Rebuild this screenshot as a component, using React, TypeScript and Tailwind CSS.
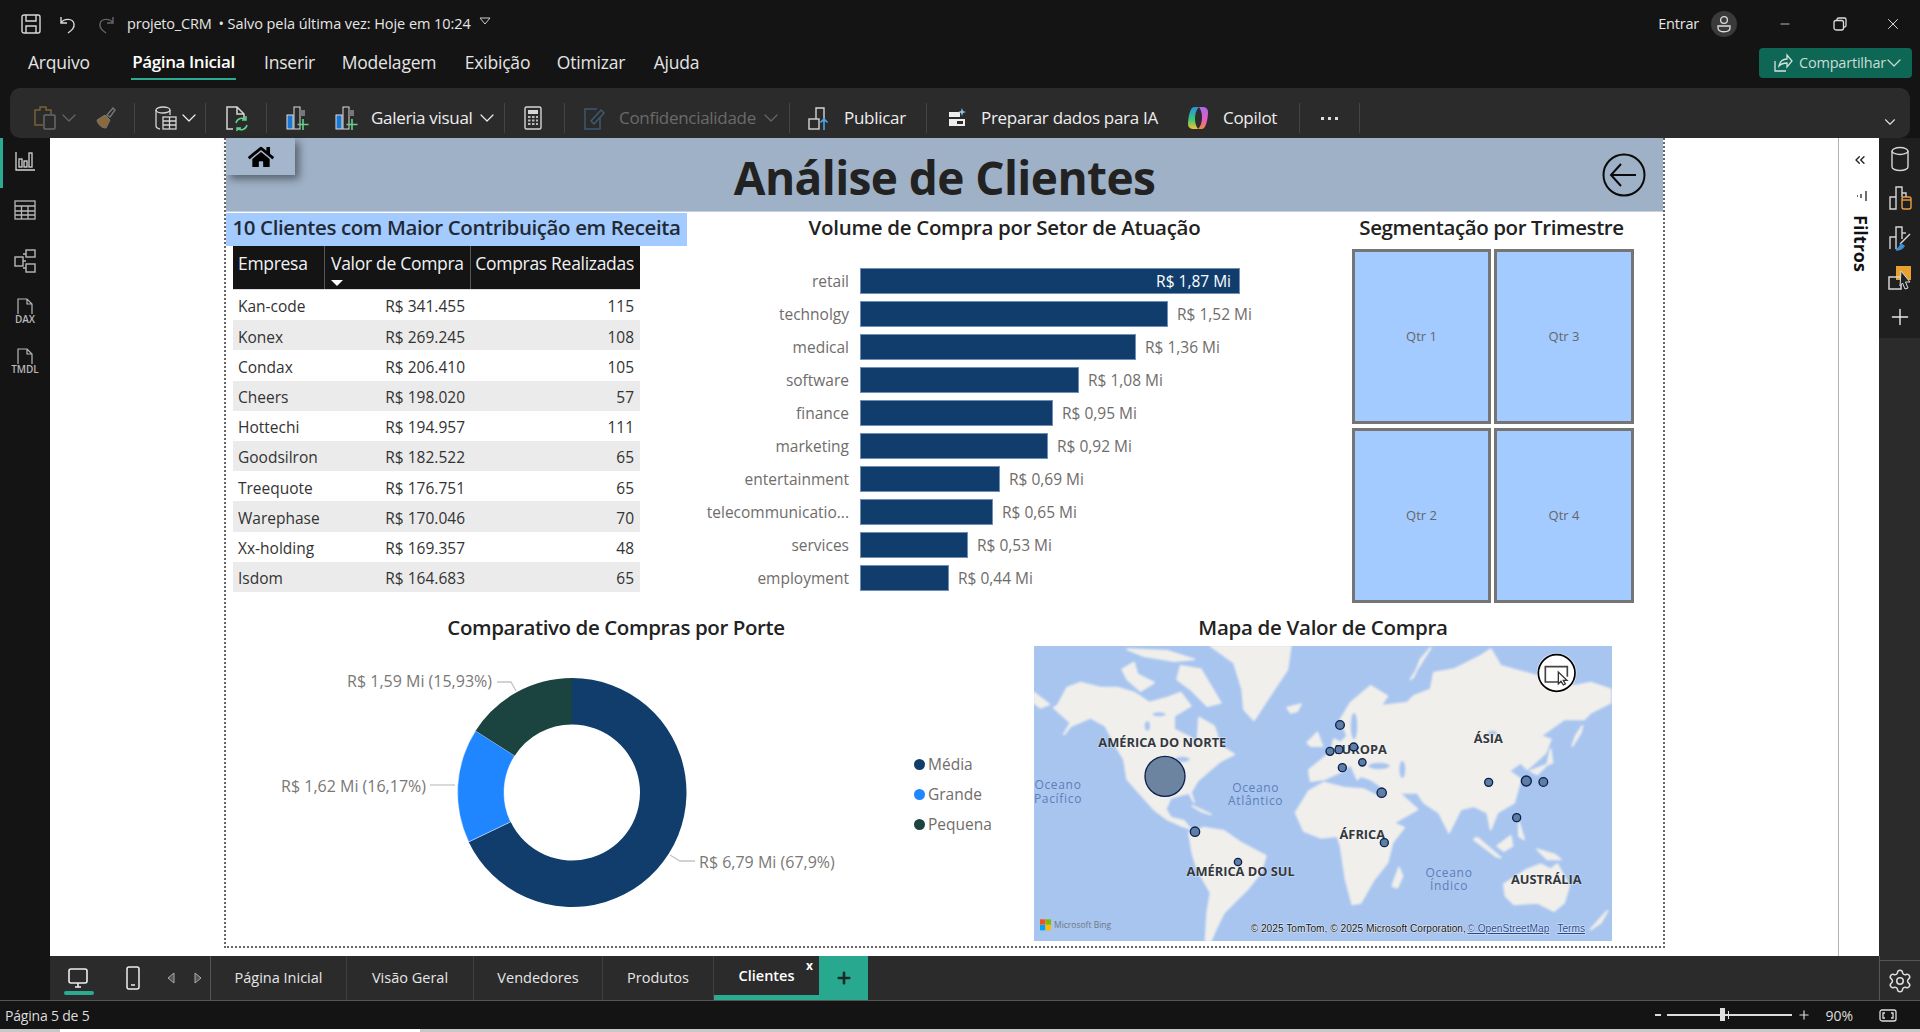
import { FaHome } from 'react-icons/fa'
import { ChevronDown, ChevronsLeft, Plus, Settings, X, Minus } from 'lucide-react'

const CLIENTS = [
  ['Kan-code', 'R$ 341.455', '115'],
  ['Konex', 'R$ 269.245', '108'],
  ['Condax', 'R$ 206.410', '105'],
  ['Cheers', 'R$ 198.020', '57'],
  ['Hottechi', 'R$ 194.957', '111'],
  ['Goodsilron', 'R$ 182.522', '65'],
  ['Treequote', 'R$ 176.751', '65'],
  ['Warephase', 'R$ 170.046', '70'],
  ['Xx-holding', 'R$ 169.357', '48'],
  ['Isdom', 'R$ 164.683', '65'],
]

const SECTORS = [
  { name: 'retail', value: 'R$ 1,87 Mi', width: 380 },
  { name: 'technolgy', value: 'R$ 1,52 Mi', width: 308 },
  { name: 'medical', value: 'R$ 1,36 Mi', width: 276 },
  { name: 'software', value: 'R$ 1,08 Mi', width: 219 },
  { name: 'finance', value: 'R$ 0,95 Mi', width: 193 },
  { name: 'marketing', value: 'R$ 0,92 Mi', width: 188 },
  { name: 'entertainment', value: 'R$ 0,69 Mi', width: 140 },
  { name: 'telecommunicatio...', value: 'R$ 0,65 Mi', width: 133 },
  { name: 'services', value: 'R$ 0,53 Mi', width: 108 },
  { name: 'employment', value: 'R$ 0,44 Mi', width: 89 },
]

const BUBBLES = [
  [393, 391, 60], [483, 557, 14], [612, 648, 11], [918, 237, 13], [888, 316, 12], [915, 311, 12], [959, 303, 12],
  [985, 349, 11], [925, 365, 12], [1043, 440, 14], [1051, 590, 12], [1364, 409, 12], [1477, 405, 15], [1528, 408, 13], [1448, 515, 12],
]

const LAND = [
  // america do norte
  '70,180 100,125 140,110 200,125 250,125 300,140 345,170 400,155 440,140 470,180 420,210 420,250 470,275 490,300 495,215 540,240 560,300 600,325 560,345 530,370 490,405 470,440 480,468 465,440 410,455 395,490 410,515 450,525 468,548 445,540 400,520 360,490 320,445 280,400 270,340 240,290 215,240 170,215 110,240 90,265 110,230 60,185',
  '265,70 300,50 310,85 360,110 320,135 280,100',
  '440,60 500,70 560,170 520,180 470,130 430,100',
  '280,10 400,15 480,40 420,45 330,30',
  '530,0 770,0 760,70 720,130 660,222 630,190 625,130 600,50',
  '760,185 800,175 790,195 770,200',
  '0,140 45,175 20,185 0,170',
  '475,480 530,505 500,495',
  // america do sul
  '465,560 510,545 570,555 620,590 695,630 680,680 640,730 600,770 570,800 545,850 530,885 515,885 520,800 530,740 490,670 475,620',
  // africa
  '785,500 825,435 870,410 930,425 990,430 1040,455 1075,530 1110,545 1075,590 1060,650 1020,700 980,770 955,775 935,700 920,600 910,570 860,575 810,555',
  '1075,720 1095,665 1105,690 1090,725',
  // eurasia
  '825,372 870,335 890,320 900,280 920,290 940,270 920,220 950,170 1010,120 1060,150 1040,180 1120,170 1140,150 1190,130 1200,80 1260,70 1340,30 1370,10 1400,60 1510,90 1620,120 1670,110 1730,130 1730,170 1670,200 1650,220 1590,220 1520,270 1550,280 1535,320 1480,370 1460,350 1425,375 1460,400 1440,470 1390,500 1370,550 1360,500 1320,480 1280,490 1245,560 1215,500 1170,470 1150,440 1095,440 1150,490 1080,530 1050,470 1040,420 1010,400 980,390 970,400 950,355 925,375 870,400 830,405',
  '1130,100 1190,5 1160,40 1140,90',
  '820,290 850,260 865,300 830,300',
  '1550,310 1555,350 1490,375 1510,385 1540,355',
  '1615,300 1640,260 1645,240 1625,270',
  '1330,575 1400,635 1385,630 1320,580',
  '1390,600 1430,570 1435,600 1410,615',
  '1455,530 1470,580 1455,570',
  '1510,610 1560,625 1580,640 1540,640',
  // australia
  '1410,715 1480,670 1520,655 1550,670 1570,655 1605,720 1590,770 1560,795 1510,770 1440,775 1415,750',
  '1670,850 1720,795 1700,830',
]

const Sep = ({ className }: { className: string }) => <div className={`h-[30px] w-px bg-[#444] ${className}`} />

const Chevron = ({ className }: { className: string }) => (
  <span className={`flex w-[14px] shrink-0 justify-center ${className}`}>
    <ChevronDown size={24} strokeWidth={1.2} className="shrink-0" />
  </span>
)

const BarPlusIcon = ({ className }: { className: string }) => (
  <svg viewBox="0 0 24 26" fill="none" className={`h-[26px] w-[24px] shrink-0 ${className}`}>
    <rect x="2" y="10" width="6" height="14" fill="#1976d2" stroke="#ddd" />
    <rect x="9" y="2" width="6" height="22" stroke="#ddd" />
    <rect x="15" y="5" width="5" height="6" fill="#777" />
    <path d="M18 14v11M12.5 19.5h11" stroke="#5fd38a" strokeWidth="1.6" />
  </svg>
)

const TitleBar = () => (
  <div className="flex h-[48px] shrink-0 items-center text-[#e6e6e6]">
    <svg viewBox="0 0 20 20" fill="none" stroke="#d8d8d8" strokeWidth="1.4" className="ml-[21px] h-[20px] w-[20px]">
      <rect x="1" y="1" width="18" height="18" rx="2" />
      <path d="M5 1v6h10V1M5 19v-7h10v7" />
    </svg>
    <svg viewBox="0 0 20 20" fill="none" stroke="#d8d8d8" strokeWidth="1.4" className="ml-[17px] h-[20px] w-[20px]">
      <path d="M3 3v6h6M3 9c3-5 12-5 13 1 .6 4-2 6-6 9" />
    </svg>
    <svg viewBox="0 0 20 20" fill="none" stroke="#666" strokeWidth="1.4" className="ml-[18px] h-[20px] w-[20px]">
      <path d="M17 3v6h-6M17 9c-3-5-12-5-13 1-.6 4 2 6 6 9" />
    </svg>
    <span className="ml-[11px] text-[14.5px] tracking-[-0.2px]">projeto_CRM</span>
    <span className="ml-[7px] text-[14.5px] tracking-[-0.07px]">• Salvo pela última vez: Hoje em 10:24</span>
    <svg viewBox="0 0 12 8" fill="none" stroke="#ccc" className="mb-[6px] ml-[8px] h-[8px] w-[12px]">
      <path d="M1 1h10L6 7z" />
    </svg>
    <span className="ml-auto text-[14.5px] tracking-[-0.2px]">Entrar</span>
    <div className="ml-[12px] flex h-[26px] w-[26px] items-center justify-center rounded-full bg-[#3a3a3a]">
      <svg viewBox="0 0 16 18" fill="none" stroke="#ddd" strokeWidth="1.3" className="h-[18px] w-[16px]">
        <circle cx="8" cy="5" r="3.4" />
        <path d="M2 11h12v2c0 5-12 5-12 0z" />
      </svg>
    </div>
    <Minus size={14} strokeWidth={1.4} className="ml-[41px] text-[#ddd]" />
    <svg viewBox="0 0 14 14" fill="none" stroke="#ddd" strokeWidth="1.3" className="ml-[41px] h-[14px] w-[14px]">
      <rect x="1" y="3.5" width="9.5" height="9.5" rx="2" />
      <path d="M4 3.5V2.5a1.5 1.5 0 0 1 1.5-1.5h6a1.5 1.5 0 0 1 1.5 1.5v6a1.5 1.5 0 0 1-1.5 1.5h-1" />
    </svg>
    <X size={18} strokeWidth={1.3} className="ml-[37px] mr-[18px] text-[#ddd]" />
  </div>
)

const MenuBar = () => (
  <div className="flex h-[40px] shrink-0 items-start whitespace-nowrap text-[17.5px] tracking-[-0.2px] text-[#e4e4e4]">
    <span className="ml-[28px] w-[61px] pt-[1px] text-center">Arquivo</span>
    <span className="ml-[42px] h-[32px] w-[105px] border-b-2 border-[#2bab92] pt-[1px] text-center text-[17px] font-semibold tracking-[-0.4px] text-white">
      Página Inicial
    </span>
    <span className="ml-[15px] w-[77px] pt-[1px] text-center">Inserir</span>
    <span className="w-[122px] pt-[1px] text-center">Modelagem</span>
    <span className="w-[95px] pt-[1px] text-center">Exibição</span>
    <span className="w-[92px] pt-[1px] text-center">Otimizar</span>
    <span className="w-[79px] pt-[1px] text-center">Ajuda</span>
    <div className="ml-auto mr-[8px] flex h-[30px] w-[153px] items-center rounded-[4px] bg-[#0e6655] pl-[14px] text-[14.5px] text-[#c9ddd5]">
      <svg viewBox="0 0 20 20" fill="none" stroke="#d5e3dd" strokeWidth="1.3" className="h-[20px] w-[20px] shrink-0">
        <path d="M2 8v10h11M6 13c1-5 4-7 8-7V2l5 6-5 6v-4c-3 0-6 1-8 3z" />
      </svg>
      <span className="ml-[6px]">Compartilhar</span>
      <Chevron className="ml-[1px]" />
    </div>
  </div>
)

const Ribbon = () => (
  <div className="ml-[10px] mr-[10px] flex h-[50px] shrink-0 items-center rounded-[10px] bg-[#2b2b2b] pt-[10px] text-[17px] tracking-[-0.3px] text-[#eeeeee]">
    <svg viewBox="0 0 24 26" fill="none" stroke="#6a6a6a" strokeWidth="1.5" className="ml-[23px] h-[26px] w-[24px] shrink-0">
      <path d="M10 20H2V5h5V2h6v3h5v4" stroke="#7a6238" />
      <rect x="11" y="10" width="11" height="14" rx="1" />
    </svg>
    <Chevron className="ml-[5px] text-[#666]" />
    <svg viewBox="0 0 24 26" fill="none" className="ml-[17px] h-[26px] w-[24px] shrink-0">
      <path d="M14 10l6-7 2 2-5 7z" stroke="#777" strokeWidth="1.4" />
      <path d="M4 15l8-5 5 5-4 8c-4 0-8-3-9-8z" fill="#8a6a3a" stroke="#777" />
    </svg>
    <Sep className="ml-[17px]" />
    <svg viewBox="0 0 24 26" fill="none" stroke="#d5d5d5" strokeWidth="1.3" className="ml-[19px] h-[26px] w-[24px] shrink-0">
      <ellipse cx="9" cy="5" rx="7" ry="3" />
      <path d="M2 5v16c0 1.5 2 2.5 4 3M16 5v5" />
      <rect x="9" y="12" width="13" height="12" />
      <path d="M9 16h13M9 20h13M15.5 12v12" />
    </svg>
    <Chevron className="ml-[4px] text-[#eee]" />
    <Sep className="ml-[9px]" />
    <svg viewBox="0 0 24 26" fill="none" strokeWidth="1.5" className="ml-[19px] h-[26px] w-[24px] shrink-0">
      <path d="M8 24H2V2h10l7 7v4M12 2v7h7" stroke="#d5d5d5" />
      <path d="M11 18a6 6 0 0 1 10-3M22 20a6 6 0 0 1-10 3M21 11v4h-4M12 27v-4h4" stroke="#5fd38a" />
    </svg>
    <Sep className="ml-[17px]" />
    <BarPlusIcon className="ml-[18px]" />
    <BarPlusIcon className="ml-[25px]" />
    <span className="ml-[13px] w-[101px] whitespace-nowrap">Galeria visual</span>
    <Chevron className="ml-[8px] text-[#eee]" />
    <Sep className="ml-[10px]" />
    <svg viewBox="0 0 24 26" fill="none" className="ml-[16px] h-[26px] w-[24px] shrink-0">
      <rect x="4" y="2" width="16" height="22" rx="1.5" stroke="#d5d5d5" strokeWidth="1.4" />
      <rect x="7" y="5" width="10" height="4" fill="#d5d5d5" />
      <path d="M7 12h2.5M11 12h2.5M15 12h2M7 15.5h2.5M11 15.5h2.5M15 15.5h2M7 19h2.5M11 19h2.5M15 19h2" stroke="#bbb" strokeWidth="2" />
    </svg>
    <Sep className="ml-[19px]" />
    <svg viewBox="0 0 24 26" fill="none" className="ml-[18px] h-[26px] w-[24px] shrink-0">
      <path d="M14 4H2v20h15V12" stroke="#3d5a72" strokeWidth="1.5" />
      <path d="M8 16l10-11 3 3-10 11z" stroke="#3d5a72" strokeWidth="1.5" />
    </svg>
    <span className="ml-[12px] w-[139px] whitespace-nowrap text-[#6a6a6a]">Confidencialidade</span>
    <Chevron className="ml-[6px] text-[#666]" />
    <Sep className="ml-[11px]" />
    <svg viewBox="0 0 24 26" fill="none" stroke="#d5d5d5" strokeWidth="1.4" className="ml-[17px] h-[26px] w-[24px] shrink-0">
      <rect x="2" y="14" width="10" height="10" />
      <path d="M9 14V3h8v14M17 3h0" />
      <path d="M17 25V14M13.5 17.5L17 14l3.5 3.5" stroke="#4aa3e8" strokeWidth="1.6" />
    </svg>
    <span className="ml-[13px] w-[62px] whitespace-nowrap">Publicar</span>
    <Sep className="ml-[20px]" />
    <svg viewBox="0 0 24 26" fill="none" className="ml-[18px] h-[26px] w-[24px] shrink-0">
      <path d="M4 7h11v5H4zM4 14h16v7H4z" fill="#eee" />
      <path d="M17 3l1 3 3 1-3 1-1 3-1-3-3-1 3-1z" fill="#8ec5f0" />
      <rect x="12" y="16" width="6" height="3" fill="#2b2b2b" />
    </svg>
    <span className="ml-[12px] w-[179px] whitespace-nowrap">Preparar dados para IA</span>
    <svg viewBox="0 0 24 26" className="ml-[26px] h-[26px] w-[24px] shrink-0">
      <defs>
        <linearGradient id="cpA" x1="0" y1="0" x2="0" y2="1">
          <stop offset="0" stopColor="#2a8fe8" />
          <stop offset="0.55" stopColor="#3bc47a" />
          <stop offset="1" stopColor="#f2c230" />
        </linearGradient>
        <linearGradient id="cpB" x1="0" y1="0" x2="0" y2="1">
          <stop offset="0" stopColor="#a86be8" />
          <stop offset="0.6" stopColor="#e85ec0" />
          <stop offset="1" stopColor="#f08a3c" />
        </linearGradient>
      </defs>
      <path d="M8 2h5c-3 3-4 7-4 12 0 4 1 7 3 10H8c-3 0-6-1-6-5 0-6 2-17 6-17z" fill="url(#cpA)" />
      <path d="M16 24h-4c3-3 4-7 4-12 0-4-1-7-3-10h3c3 0 6 1 6 5 0 6-2 17-6 17z" fill="url(#cpB)" />
    </svg>
    <span className="ml-[13px] w-[57px] whitespace-nowrap">Copilot</span>
    <Sep className="ml-[19px]" />
    <div className="ml-[17px] flex w-[24px] justify-center gap-[4px]">
      <div className="h-[3px] w-[3px] bg-[#ddd]" />
      <div className="h-[3px] w-[3px] bg-[#ddd]" />
      <div className="h-[3px] w-[3px] bg-[#ddd]" />
    </div>
    <Sep className="ml-[18px]" />
    <ChevronDown size={18} strokeWidth={1.5} className="ml-auto mr-[11px] mt-[8px] text-[#ddd]" />
  </div>
)

const LeftRail = () => (
  <div className="relative flex w-[50px] shrink-0 flex-col items-center bg-[#141414] pt-[10px]">
    <div className="absolute left-0 top-0 h-[50px] w-[3px] bg-[#2bab92]" />
    <svg viewBox="0 0 24 24" fill="none" stroke="#d5d5d5" strokeWidth="1.3" className="h-[24px] w-[24px]">
      <path d="M3 4v18h19" />
      <rect x="6" y="11" width="3" height="8" />
      <rect x="11" y="13" width="3" height="6" />
      <rect x="16" y="5" width="3" height="14" />
    </svg>
    <svg viewBox="0 0 24 24" fill="none" stroke="#b8b8b8" strokeWidth="1.3" className="mt-[26px] h-[24px] w-[24px]">
      <rect x="2" y="3" width="20" height="18" />
      <path d="M2 8h20M2 13h20M2 17h20M8.5 8v13M15 8v13" />
    </svg>
    <svg viewBox="0 0 24 24" fill="none" stroke="#b8b8b8" strokeWidth="1.4" className="mt-[27px] h-[24px] w-[24px]">
      <rect x="13" y="1" width="9" height="7" />
      <rect x="2" y="8" width="8" height="9" />
      <rect x="13" y="15" width="9" height="8" />
      <path d="M10 5h3M10 19h3M10 12h3" />
    </svg>
    <div className="mt-[25px] flex h-[30px] w-[28px] flex-col items-center">
      <svg viewBox="0 0 20 16" fill="none" stroke="#b8b8b8" strokeWidth="1.2" className="h-[16px] w-[20px]">
        <path d="M3 16V1h9l5 5v10M12 1v5h5" />
      </svg>
      <span className="text-[10px] font-semibold leading-[11px] text-[#b8b8b8]">DAX</span>
    </div>
    <div className="mt-[20px] flex h-[30px] w-[32px] flex-col items-center">
      <svg viewBox="0 0 20 16" fill="none" stroke="#b8b8b8" strokeWidth="1.2" className="h-[16px] w-[20px]">
        <path d="M3 16V1h9l5 5v10M12 1v5h5" />
      </svg>
      <span className="text-[10px] font-semibold leading-[11px] text-[#b8b8b8]">TMDL</span>
    </div>
  </div>
)

const RightRail = () => (
  <div className="flex w-[41px] shrink-0 flex-col bg-[#2b2b2b]">
    <div className="flex h-[200px] flex-col items-center bg-[#1f1f1f] pt-[8px]">
      <svg viewBox="0 0 20 26" fill="none" stroke="#d5d5d5" strokeWidth="1.4" className="h-[26px] w-[20px]">
        <ellipse cx="10" cy="5" rx="8" ry="3.5" />
        <path d="M2 5v16c0 2 4 3.5 8 3.5s8-1.500 8-3.500V5" />
      </svg>
      <svg viewBox="0 0 24 26" fill="none" stroke="#d5d5d5" strokeWidth="1.4" className="mt-[13px] h-[26px] w-[24px]">
        <path d="M2 24V12h6v12zM8 24V2h6v10" />
        <path d="M14 8h4v4" />
        <rect x="14" y="12" width="9" height="12" rx="2" stroke="#e8a040" />
        <path d="M14 15h9" stroke="#e8a040" />
      </svg>
      <svg viewBox="0 0 24 26" fill="none" stroke="#d5d5d5" strokeWidth="1.4" className="mt-[14px] h-[26px] w-[24px]">
        <path d="M2 24V12h6v12M8 24V2h6v12" />
        <path d="M14 8h4" />
        <path d="M22 9L12 19" stroke="#d5d5d5" />
        <path d="M8 25c2-1 4-3 5-6l3 2c-2 3-5 4-8 4z" fill="#3a8fd8" stroke="#3a8fd8" />
      </svg>
      <svg viewBox="0 0 24 26" fill="none" className="mt-[14px] h-[26px] w-[24px]">
        <rect x="8" y="1" width="15" height="14" fill="#e8a030" />
        <rect x="1" y="12" width="12" height="12" stroke="#d5d5d5" strokeWidth="1.5" />
        <path d="M13 6l9 11-4.500 0 2.500 6-3 1-2.500-6-2.500 3z" fill="#222" stroke="#ddd" />
      </svg>
      <Plus size={26} strokeWidth={1.3} className="mt-[13px] text-[#e8e8e8]" />
    </div>
  </div>
)

const Donut = () => {
  const cx = 346
  const cy = 132.5
  const arc = (from: number, to: number) => {
    const pt = (p: number, r: number) => {
      const a = 2 * Math.PI * p - Math.PI / 2
      return `${cx + r * Math.cos(a)} ${cy + r * Math.sin(a)}`
    }
    const big = to - from > 0.5 ? 1 : 0
    return `M${pt(from, 114.5)}A114.5 114.5 0 ${big} 1 ${pt(to, 114.5)}L${pt(to, 68)}A68 68 0 ${big} 0 ${pt(from, 68)}Z`
  }
  return (
    <svg width="660" height="270" className="mt-[18px] shrink-0">
      <path d={arc(0, 0.679)} fill="#113d6d" />
      <path d={arc(0.679, 0.8407)} fill="#2086ff" stroke="#fff" strokeWidth="0.5" />
      <path d={arc(0.8407, 1)} fill="#1b4441" />
      <g fill="none" stroke="#c4c4c4" strokeWidth="1.3">
        <path d="M271 22h14l5 9" />
        <path d="M204 125h25" />
        <path d="M444 195l10 6h15" />
      </g>
      <g fill="#7a7876" fontSize="16">
        <text x="266" y="27" textAnchor="end">R$ 1,59 Mi (15,93%)</text>
        <text x="200" y="132" textAnchor="end">R$ 1,62 Mi (16,17%)</text>
        <text x="473" y="208">R$ 6,79 Mi (67,9%)</text>
      </g>
    </svg>
  )
}

const Legend = () => (
  <div className="ml-[28px] mt-[112px] flex flex-col gap-[10px] text-[15.5px] leading-[20px] text-[#6f6d6b]">
    <div className="flex items-center gap-[3px]">
      <div className="h-[11px] w-[11px] rounded-full bg-[#113d6d]" />
      Média
    </div>
    <div className="flex items-center gap-[3px]">
      <div className="h-[11px] w-[11px] rounded-full bg-[#2086ff]" />
      Grande
    </div>
    <div className="flex items-center gap-[3px]">
      <div className="h-[11px] w-[11px] rounded-full bg-[#1b4441]" />
      Pequena
    </div>
  </div>
)

const WorldMap = () => (
  <svg viewBox="0 0 1734 885" width="578" height="295" className="shrink-0 bg-[#a8c5f0]">
    <defs>
      <filter id="soft">
        <feGaussianBlur stdDeviation="3" />
      </filter>
    </defs>
    <g filter="url(#soft)">
      {LAND.map((points, i) => (
        <polygon key={i} points={points} fill="#f0efeb" stroke="#f0efeb" strokeWidth="6" strokeLinejoin="round" />
      ))}
      <ellipse cx="1035" cy="360" rx="32" ry="10" fill="#a8c5f0" />
      <ellipse cx="1105" cy="370" rx="9" ry="26" fill="#a8c5f0" />
      <ellipse cx="960" cy="240" rx="10" ry="40" fill="#a8c5f0" />
      <ellipse cx="445" cy="340" rx="22" ry="8" fill="#a8c5f0" />
      <ellipse cx="375" cy="205" rx="20" ry="6" fill="#a8c5f0" />
      <ellipse cx="340" cy="240" rx="8" ry="14" fill="#a8c5f0" />
      <ellipse cx="1375" cy="260" rx="14" ry="6" fill="#a8c5f0" />
    </g>
    <g fill="#33383f" fontSize="38.500" fontWeight="700" textAnchor="middle" stroke="#fff" strokeOpacity="0.5" strokeWidth="3" paintOrder="stroke">
      <text x="385" y="304">AMÉRICA DO NORTE</text>
      <text x="1363" y="290">ÁSIA</text>
      <text x="980" y="324">EUROPA</text>
      <text x="985" y="580">ÁFRICA</text>
      <text x="620" y="689">AMÉRICA DO SUL</text>
      <text x="1537" y="715">AUSTRÁLIA</text>
    </g>
    <g fill="#5b7fb8" fontSize="36" textAnchor="middle" letterSpacing="2">
      <text x="72" y="430">Oceano</text>
      <text x="72" y="470">Pacífico</text>
      <text x="665" y="437">Oceano</text>
      <text x="665" y="477">Atlântico</text>
      <text x="1245" y="693">Oceano</text>
      <text x="1245" y="733">Índico</text>
    </g>
    {BUBBLES.map(([x, y, r], i) => (
      <circle key={i} cx={x} cy={y} r={r} fill={r > 20 ? '#6c84a0' : '#5d7fa3'} stroke="#0e1f50" strokeWidth="4" />
    ))}
    <circle cx="1568" cy="81" r="60" fill="#fff" fillOpacity="0.5" />
    <circle cx="1568" cy="81" r="55" fill="#fff" stroke="#000" strokeWidth="5" />
    <path d="M1590 108h-56V62h66v30" fill="none" stroke="#444" strokeWidth="5" />
    <path d="M1573 78v36l8-8 7 11 6-3-6-11h11z" fill="#fff" stroke="#333" strokeWidth="4" />
    <rect x="18" y="820" width="16" height="16" fill="#f25022" />
    <rect x="35" y="820" width="16" height="16" fill="#7fba00" />
    <rect x="18" y="837" width="16" height="16" fill="#00a4ef" />
    <rect x="35" y="837" width="16" height="16" fill="#ffb900" />
    <text x="60" y="846" fill="#6f7680" fontSize="25.500">Microsoft Bing</text>
    <g fontSize="30.500" fontFamily="Liberation Sans, sans-serif" stroke="#fff" strokeOpacity="0.7" strokeWidth="3" paintOrder="stroke">
      <text x="650" y="858" fill="#111">© 2025 TomTom, © 2025 Microsoft Corporation,</text>
      <text x="1300" y="858" fill="#24478f" textDecoration="underline">© OpenStreetMap</text>
      <text x="1570" y="858" fill="#24478f" textDecoration="underline">Terms</text>
    </g>
  </svg>
)

const Report = () => (
  <div className="ml-[174px] flex h-[810px] w-[1441px] flex-col border-x-2 border-b-2 border-dotted border-[#666]">
    <div className="relative flex h-[74px] shrink-0 items-center justify-center border-b border-[#c8d2de] bg-[#9fb1c6] pt-[6px] text-[46px] font-bold tracking-[-0.6px] text-[#222]">
      Análise de Clientes
      <div className="absolute left-0 top-0 flex h-[37px] w-[69px] items-center justify-center bg-[#a4b6cb] shadow-[4px_4px_8px_rgba(0,0,0,0.45)]">
        <FaHome size={26} className="text-black" />
      </div>
      <svg viewBox="0 0 44 44" fill="none" stroke="#0a0a0a" strokeWidth="2" className="absolute right-[17px] top-[15px] h-[44px] w-[44px]">
        <circle cx="22" cy="22" r="20.500" />
        <path d="M34 22H9M19 11L9 22l10 11" />
      </svg>
    </div>

    <div className="flex h-[400px] shrink-0">
      <div className="flex w-[470px] shrink-0 flex-col">
        <div className="mt-px flex h-[33px] w-[461px] items-center justify-center whitespace-nowrap bg-[#a3cbff] pb-[4px] text-[20.5px] font-semibold tracking-[-0.4px] text-[#1f2a35]">
          10 Clientes com Maior Contribuição em Receita
        </div>
        <div className="ml-[7px] w-[407px]">
          <div className="flex h-[43px] bg-[#141414] text-[17.5px] leading-[34px] tracking-[-0.3px] text-[#f2f2f2]">
            <div className="w-[92px] border-r border-[#555] pl-[5px]">Empresa</div>
            <div className="relative w-[146px] border-r border-[#555] pl-[6px]">
              Valor de Compra
              <div className="absolute bottom-[3px] left-[6px] h-0 w-0 border-x-[6px] border-t-[6px] border-x-transparent border-t-white" />
            </div>
            <div className="w-[169px] pr-[6px] text-right">Compras Realizadas</div>
          </div>
          <div className="flex h-[303px] flex-col border-t border-[#ddd] text-[15.5px] text-[#333]">
            {CLIENTS.map(([company, value, qty], i) => (
              <div key={company} className={`flex flex-1 items-center pt-[4px] ${i % 2 === 1 ? 'bg-[#ebebeb]' : 'bg-white'}`}>
                <div className="w-[92px] pl-[5px]">{company}</div>
                <div className="w-[146px] pr-[6px] text-right">{value}</div>
                <div className="w-[169px] pr-[6px] text-right">{qty}</div>
              </div>
            ))}
          </div>
        </div>
      </div>

      <div className="flex w-[644px] shrink-0 flex-col">
        <div className="mt-px flex h-[33px] w-[617px] items-center justify-center pb-[4px] text-[20.5px] font-semibold tracking-[-0.3px] text-[#222]">
          Volume de Compra por Setor de Atuação
        </div>
        <div className="mt-[22px] flex flex-col gap-[7px]">
          {SECTORS.map((s, i) => (
            <div key={s.name} className="flex h-[26px] items-center text-[15.5px] text-[#6f6d6b]">
              <div className="w-[153px] whitespace-nowrap pt-[2px] text-right">{s.name}</div>
              <div
                className="ml-[11px] flex h-[26px] items-center justify-end border border-[#6f8fb5] bg-[#113d6d] pr-[8px] pt-[2px] text-white"
                style={{ width: s.width }}
              >
                {i === 0 && s.value}
              </div>
              {i > 0 && <span className="ml-[9px] pt-[2px]">{s.value}</span>}
            </div>
          ))}
        </div>
      </div>

      <div className="flex w-[323px] shrink-0 flex-col">
        <div className="mt-px flex h-[33px] w-[303px] items-center justify-center pb-[4px] text-[20.5px] font-semibold tracking-[-0.4px] text-[#222]">
          Segmentação por Trimestre
        </div>
        <div className="ml-[12px] mt-[3px] grid grid-cols-[139px_140px] grid-rows-[175px_175px] gap-x-[3px] gap-y-[4px]">
          {['Qtr 1', 'Qtr 3', 'Qtr 2', 'Qtr 4'].map((q) => (
            <div key={q} className="flex items-center justify-center border-[3px] border-[#757575] bg-[#a3cbff] text-[13px] text-[#666]">
              {q}
            </div>
          ))}
        </div>
      </div>
    </div>

    <div className="flex">
      <div className="flex w-[808px] shrink-0 flex-col">
        <div className="flex h-[30px] w-[780px] items-center justify-center text-[20.5px] font-semibold tracking-[-0.4px] text-[#222]">
          Comparativo de Compras por Porte
        </div>
        <div className="flex">
          <Donut />
          <Legend />
        </div>
      </div>
      <div className="flex flex-col">
        <div className="flex h-[30px] w-[578px] items-center justify-center text-[20.5px] font-semibold tracking-[-0.3px] text-[#222]">
          Mapa de Valor de Compra
        </div>
        <div className="mt-[4px]">
          <WorldMap />
        </div>
      </div>
    </div>
  </div>
)

const TabBar = () => (
  <div className="flex h-[45px] shrink-0 border-b border-[#555] bg-[#2b2b2b] text-[14.5px] text-[#e6e6e6]">
    <div className="w-[50px] bg-[#141414]" />
    <div className="relative flex w-[161px] items-center border-r border-[#555]">
      <svg viewBox="0 0 24 24" fill="none" stroke="#eee" strokeWidth="1.6" className="ml-[16px] h-[24px] w-[24px]">
        <rect x="3" y="3" width="18" height="14" rx="2" />
        <path d="M9 21h6M12 17v4" />
      </svg>
      <div className="absolute bottom-[5px] left-[14px] h-[4px] w-[30px] rounded-full bg-[#2bab92]" />
      <svg viewBox="0 0 14 24" fill="none" stroke="#eee" strokeWidth="1.5" className="ml-[36px] h-[24px] w-[14px]">
        <rect x="1" y="1" width="12" height="22" rx="2" />
        <path d="M5 19h4" />
      </svg>
      <svg viewBox="0 0 8 12" fill="#555" stroke="#aaa" className="ml-[27px] h-[12px] w-[8px]">
        <path d="M7 1L1 6l6 5z" />
      </svg>
      <svg viewBox="0 0 8 12" fill="#555" stroke="#aaa" className="ml-[19px] h-[12px] w-[8px]">
        <path d="M1 1l6 5-6 5z" />
      </svg>
    </div>
    <div className="flex w-[136px] items-center justify-center border-r border-[#3f3f3f]">Página Inicial</div>
    <div className="flex w-[127px] items-center justify-center border-r border-[#3f3f3f]">Visão Geral</div>
    <div className="flex w-[129px] items-center justify-center border-r border-[#3f3f3f]">Vendedores</div>
    <div className="flex w-[111px] items-center justify-center border-r border-[#3f3f3f]">Produtos</div>
    <div className="relative flex w-[105px] items-center justify-center border-b-[5px] border-[#2bab92] font-semibold text-white">
      Clientes
      <span className="absolute right-[6px] top-[2px] text-[12px] font-bold leading-[16px]">x</span>
    </div>
    <div className="flex w-[49px] items-center justify-center bg-[#28a98f]">
      <Plus size={18} strokeWidth={3.5} className="text-[#1a2a26]" />
    </div>
    <div className="flex-1" />
    <div className="flex w-[41px] flex-col border-l border-[#555]">
      <div className="h-[5px] border-b border-[#555]" />
      <div className="flex flex-1 items-center justify-center">
        <Settings size={26} strokeWidth={1.4} className="text-[#ddd]" />
      </div>
    </div>
  </div>
)

const StatusBar = () => (
  <div className="flex h-[28px] shrink-0 items-center bg-[#141414] text-[#dddddd]">
    <span className="ml-[5px] text-[14px] tracking-[-0.2px]">Página 5 de 5</span>
    <div className="ml-auto h-[2px] w-[6px] bg-[#ddd]" />
    <div className="relative ml-[6px] h-[2px] w-[125px] bg-[#ddd]">
      <div className="absolute left-[53px] top-[-6px] h-[13px] w-[5px] bg-[#ddd]" />
      <div className="absolute left-[61px] top-[-3px] h-[8px] w-px bg-[#ddd]" />
    </div>
    <Plus size={14} strokeWidth={2} className="ml-[5px]" />
    <span className="ml-[14px] text-[14px]">90%</span>
    <svg viewBox="0 0 18 13" fill="none" stroke="#ddd" strokeWidth="1.300" className="ml-[26px] mr-[23px] h-[13px] w-[18px]">
      <rect x="1" y="1" width="16" height="11" rx="2" />
      <path d="M6 4H4v5h2M12 4h2v5h-2" />
    </svg>
  </div>
)

export default function App() {
  return (
    <div className="flex h-[1032px] w-[1920px] flex-col overflow-hidden bg-[#141414] font-['Open_Sans',sans-serif]">
      <TitleBar />
      <MenuBar />
      <Ribbon />
      <div className="flex h-[818px] shrink-0">
        <LeftRail />
        <div className="flex-1 bg-white">
          <Report />
        </div>
        <div className="flex w-[41px] shrink-0 flex-col items-center border-l border-[#b3b3b3] bg-white pl-[2px] pt-[14px]">
          <ChevronsLeft size={16} strokeWidth={2} className="text-[#222]" />
          <svg viewBox="0 0 12 14" fill="none" stroke="#333" strokeWidth="1.4" className="ml-[4px] mt-[21px] h-[14px] w-[12px]">
            <path d="M10 2v10M5 5v4M1 7h1" />
          </svg>
          <span className="mt-[12px] text-[18px] font-bold text-[#111] [writing-mode:vertical-rl]">Filtros</span>
        </div>
        <RightRail />
      </div>
      <TabBar />
      <StatusBar />
      <div className="flex h-[3px] shrink-0 bg-[#c8c8c8]">
        <div className="ml-[60px] w-[360px] bg-white" />
      </div>
    </div>
  )
}
